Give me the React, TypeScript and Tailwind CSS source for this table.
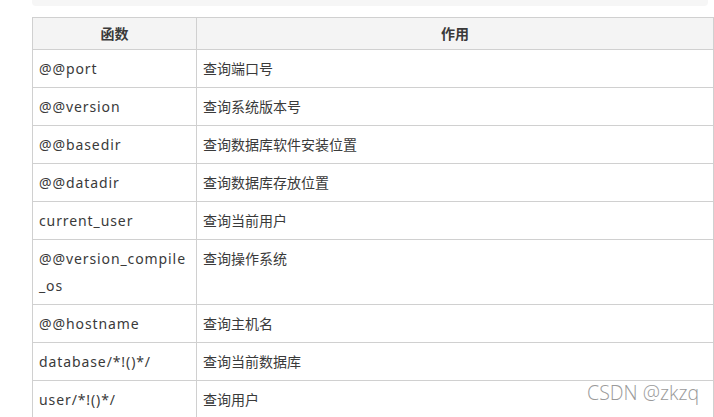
const rows: { fn: string; desc: string }[] = [
  { fn: "@@port", desc: "查询端口号" },
  { fn: "@@version", desc: "查询系统版本号" },
  { fn: "@@basedir", desc: "查询数据库软件安装位置" },
  { fn: "@@datadir", desc: "查询数据库存放位置" },
  { fn: "current_user", desc: "查询当前用户" },
  { fn: "@@version_compile_os", desc: "查询操作系统" },
  { fn: "@@hostname", desc: "查询主机名" },
  { fn: "database/*!()*/", desc: "查询当前数据库" },
  { fn: "user/*!()*/", desc: "查询用户" },
];

const App = () => {
  return (
    <div
      className="relative w-[714px] h-[417px] overflow-hidden bg-white text-[#3a3a3a]"
      style={{ fontFamily: '"Noto Sans", "Noto Sans CJK SC", sans-serif' }}
    >
      {/* code block tail above the table */}
      <div className="ml-[32px] w-[676px] h-[6px] bg-[#f6f6f6] rounded-b-[4px]"></div>

      <table className="mt-[11px] ml-[32px] w-[682px] table-fixed border-collapse text-[14px]">
        <colgroup>
          <col className="w-[164px]" />
          <col />
        </colgroup>
        <thead>
          <tr className="bg-[#f4f4f4]">
            <th className="border border-[#d0d0d0] py-[5px] leading-[21px] font-bold text-center">函数</th>
            <th className="border border-[#d0d0d0] py-[5px] leading-[21px] font-bold text-center">作用</th>
          </tr>
        </thead>
        <tbody>
          {rows.map((r) => (
            <tr key={r.fn}>
              <td className="border border-[#d0d0d0] px-[6px] py-[5px] leading-[27px] align-top break-all tracking-[0.9px]">
                {r.fn}
              </td>
              <td className="border border-[#d0d0d0] px-[6px] py-[5px] leading-[27px] align-top">{r.desc}</td>
            </tr>
          ))}
        </tbody>
      </table>

      {/* watermark */}
      <div
        className="absolute right-[15px] bottom-[10px] text-[19.5px] font-light text-[#9a9a9a] [text-shadow:0_0_2px_#fff]"
        style={{ fontFamily: '"Open Sans", "Noto Sans", sans-serif' }}
      >
        CSDN @zkzq
      </div>
    </div>
  );
};

export default App;
